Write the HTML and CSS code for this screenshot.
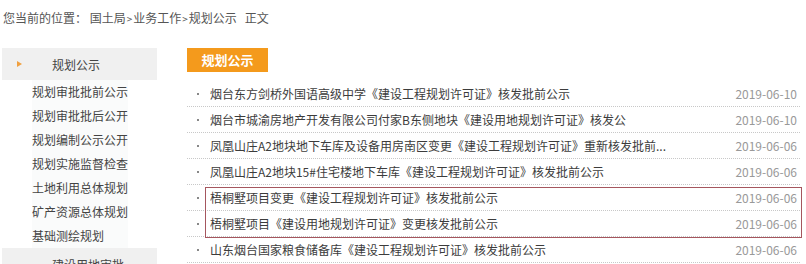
FILE: index.html
```html
<!DOCTYPE html>
<html lang="zh-CN">
<head>
<meta charset="utf-8">
<title>规划公示</title>
<link rel="stylesheet" href="styles.css">
</head>
<body>
<div class="crumb">您当前的位置： 国土局<span class="gt">&gt;</span>业务工作<span class="gt">&gt;</span>规划公示<span class="gap"></span>正文</div>
<div class="layout">
  <aside class="side">
    <div class="side-head"><span class="tri"></span><span class="side-title">规划公示</span></div>
    <ul class="sub-list">
      <li>规划审批批前公示</li>
      <li>规划审批批后公开</li>
      <li>规划编制公示公开</li>
      <li>规划实施监督检查</li>
      <li>土地利用总体规划</li>
      <li>矿产资源总体规划</li>
      <li>基础测绘规划</li>
    </ul>
    <div class="side-head"><span class="side-title">建设用地审批</span></div>
  </aside>
  <main class="main">
    <div class="tag">规划公示</div>
    <ul class="list">
      <li class="row"><span class="title">烟台东方剑桥外国语高级中学《建设工程规划许可证》核发批前公示</span><span class="date">2019-06-10</span></li>
      <li class="row"><span class="title">烟台市城渝房地产开发有限公司付家B东侧地块《建设用地规划许可证》核发公</span><span class="date">2019-06-10</span></li>
      <li class="row"><span class="title">凤凰山庄A2地块地下车库及设备用房南区变更《建设工程规划许可证》重新核发批前...</span><span class="date">2019-06-06</span></li>
      <li class="row"><span class="title">凤凰山庄A2地块15#住宅楼地下车库《建设工程规划许可证》核发批前公示</span><span class="date">2019-06-06</span></li>
      <li class="hl">
        <ul>
          <li class="row"><span class="title">梧桐墅项目变更《建设工程规划许可证》核发批前公示</span><span class="date">2019-06-06</span></li>
          <li class="row"><span class="title">梧桐墅项目《建设用地规划许可证》变更核发批前公示</span><span class="date">2019-06-06</span></li>
        </ul>
      </li>
      <li class="row"><span class="title">山东烟台国家粮食储备库《建设工程规划许可证》核发批前公示</span><span class="date">2019-06-06</span></li>
    </ul>
  </main>
</div>
</body>
</html>
```

FILE: styles.css
```css
html, body {
  margin: 0;
  padding: 0;
  background: #fff;
}
body {
  font-family: "Noto Sans CJK SC", "Noto Sans", sans-serif;
  font-size: 12px;
  color: #3c3c3c;
  overflow: hidden;
}
ul {
  list-style: none;
  margin: 0;
  padding: 0;
}
.crumb {
  height: 36px;
  line-height: 36px;
  padding-left: 3px;
  color: #555;
  white-space: nowrap;
}
.crumb .gt {
  font-size: 10px;
  margin: 0 1px;
}
.crumb .gap {
  display: inline-block;
  width: 8px;
}
.layout {
  display: flex;
  padding-top: 12px;
}
.side {
  width: 155px;
  margin-left: 2px;
  flex: none;
}
.side-head {
  height: 32px;
  background: #f0f0f0;
  display: flex;
  align-items: center;
  padding-left: 50px;
  position: relative;
  color: #444;
}
.tri {
  position: absolute;
  left: 15px;
  top: 13px;
  width: 0;
  height: 0;
  border-left: 5px solid #f0a040;
  border-top: 3px solid transparent;
  border-bottom: 3px solid transparent;
}
.sub-list {
  margin-left: 30px;
  width: 96px;
  background: #fafbfb;
}
.sub-list li {
  height: 24px;
  line-height: 24px;
  white-space: nowrap;
  overflow: hidden;
  color: #444;
}
.main {
  margin-left: 30px;
  width: 613px;
  flex: none;
}
.tag {
  width: 81px;
  height: 24px;
  line-height: 24px;
  background: #f49a1c;
  color: #fff;
  font-weight: bold;
  font-size: 13px;
  text-align: center;
}
.list {
  margin-top: 9px;
}
.row {
  height: 26px;
  box-sizing: border-box;
  border-bottom: 1px dotted #c8c8c8;
  display: flex;
  align-items: center;
  padding: 0 3px 0 10px;
  white-space: nowrap;
}
.row::before {
  content: "";
  width: 2px;
  height: 2px;
  background: #888;
  margin-right: 11px;
  flex: none;
}
.title {
  flex: 1;
  overflow: hidden;
  color: #3c3c3c;
}
.date {
  color: #999;
  flex: none;
}
.hl {
  position: relative;
}
.hl::after {
  content: "";
  position: absolute;
  left: 18px;
  right: -2px;
  top: 2px;
  bottom: -1px;
  border: 1px solid #a5565e;
  pointer-events: none;
}
```
